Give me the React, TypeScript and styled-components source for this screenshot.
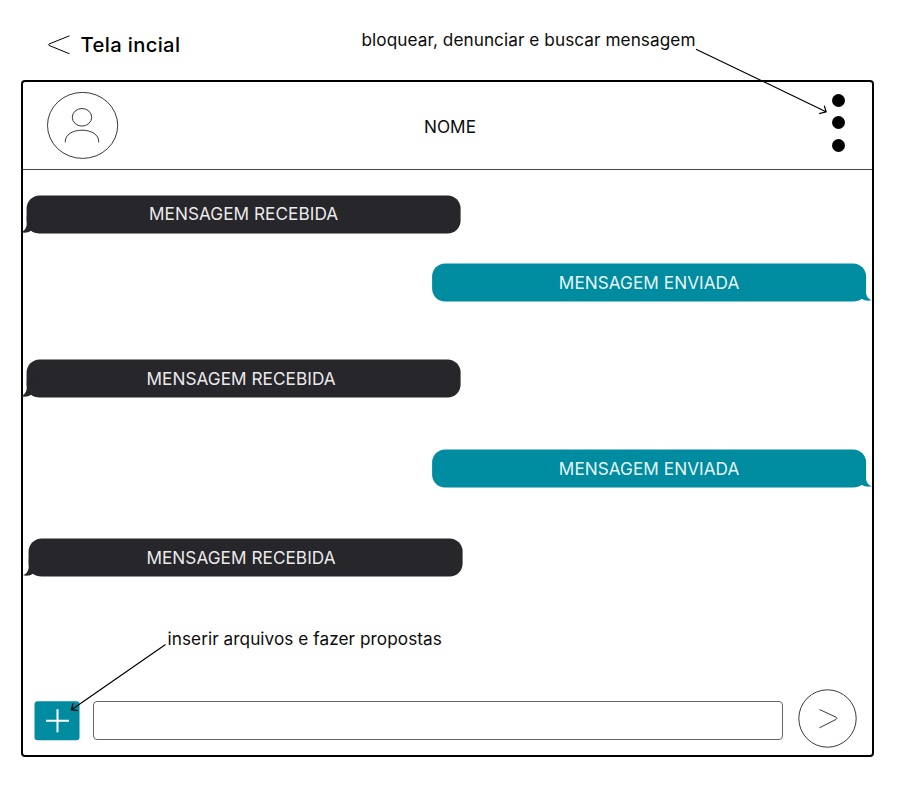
import React from "react";
import styled, { createGlobalStyle } from "styled-components";

const TEAL = "#008ca0";
const DARK = "#27262b";

const GlobalStyle = createGlobalStyle`
  * { box-sizing: border-box; }
  body {
    margin: 0;
    background: #fff;
    color: #000;
    font-family: Inter, sans-serif;
  }
  svg { display: block; overflow: visible; }
`;

const Page = styled.div`
  position: relative;
  width: 901px;
  height: 800px;
  overflow: hidden;
`;

const TopBar = styled.div`
  display: flex;
  height: 80px;
  padding-left: 47px;
`;

const BackLink = styled.div`
  display: flex;
  align-items: center;
  gap: 10.5px;
  width: 314.5px;
  height: 24px;
  margin-top: 33px;
  font-size: 20.2px;
  font-weight: 500;
  line-height: 24px;
  letter-spacing: 0.36px;
  white-space: nowrap;
`;

const Note = styled.div<{ $width: number }>`
  height: 22px;
  color: #0c0c0c;
  font-size: 17.2px;
  line-height: 22px;
  letter-spacing: 0.06px;
  white-space: nowrap;
  width: ${(p) => p.$width}px;
`;

const MenuNote = styled(Note)`
  margin-top: 29px;
`;

const FilesNote = styled(Note)`
  margin: 51px 0 0 144.5px;
`;

const Frame = styled.main`
  display: flex;
  flex-direction: column;
  width: 853px;
  height: 677px;
  margin-left: 21px;
  border: 2px solid #000;
  border-radius: 4px;
`;

const Header = styled.header`
  display: grid;
  grid-template-columns: 96px 1fr 96px;
  height: 88px;
  border-bottom: 1px solid #444;
`;

const Avatar = styled.div`
  padding: 9.5px 0 0 24.3px;
`;

const Name = styled.div`
  padding: 34px 0 0 5px;
  color: #0c0c0c;
  font-size: 17.2px;
  line-height: 22px;
  text-align: center;
`;

const MenuDots = styled.div`
  display: flex;
  flex-direction: column;
  align-items: center;
  gap: 9.5px;
  padding: 11.5px 0 0 29px;
`;

const Dot = styled.i`
  width: 13px;
  height: 13px;
  border-radius: 50%;
  background: #000;
`;

const Messages = styled.section`
  display: flex;
  flex-direction: column;
  height: 407px;
  padding-top: 26px;
`;

const Bubble = styled.div<{
  $sent?: boolean;
  $gap: number;
  $inset: number;
  $shift: number;
  $line: number;
}>`
  position: relative;
  flex: none;
  width: 434px;
  height: 38px;
  margin-bottom: ${(p) => p.$gap}px;
  margin-left: ${(p) => p.$inset}px;
  transform: translate(${(p) => (p.$sent ? 0.1 : -0.4)}px, -0.5px);
  border-radius: 13px;
  background: ${(p) => (p.$sent ? TEAL : DARK)};
  color: rgba(255, 255, 255, 0.93);
  font-size: 17.2px;
  font-weight: 400;
  line-height: ${(p) => p.$line}px;
  letter-spacing: 0.04px;
  text-align: center;
  text-indent: ${(p) => p.$shift}px;
`;

const Tail = styled.svg<{ $sent?: boolean }>`
  position: absolute;
  bottom: 0;
  ${(p) => (p.$sent ? "right: -5px; transform: scaleX(-1);" : "left: -5px;")}
`;

const Composer = styled.div`
  display: flex;
  align-items: center;
  height: 60px;
  margin-top: 38px;
  padding-left: 12px;
`;

const AddButton = styled.div`
  display: grid;
  place-items: center;
  width: 45px;
  height: 39px;
  margin-top: 5px;
  transform: translate(-0.5px, 0.2px);
  border-radius: 3px;
  background: ${TEAL};
`;

const MessageInput = styled.div`
  width: 690px;
  height: 39px;
  margin: 5px 14.5px 0 13px;
  border: 1px solid #666;
  border-radius: 4px;
`;

const Arrows = styled.svg`
  position: absolute;
  inset: 0;
  pointer-events: none;
`;

const messages = [
  { sent: false, gap: 30, inset: 4, shift: 0, line: 36 },
  { sent: true, gap: 58, inset: 409, shift: 0, line: 38 },
  { sent: false, gap: 52, inset: 4, shift: -5, line: 38 },
  { sent: true, gap: 51, inset: 409, shift: 0, line: 38 },
  { sent: false, gap: 0, inset: 6.4, shift: -10, line: 38 },
];

export default function App() {
  return (
    <>
      <GlobalStyle />
      <Page>
        <TopBar>
          <BackLink>
            <svg width="23" height="20" fill="none" stroke="#000" strokeWidth="1">
              <path d="M22.5 .8 2 9Q.8 9.7 2 10.4L22.5 18.8" />
            </svg>
            Tela incial
          </BackLink>
          <MenuNote $width={334}>bloquear, denunciar e buscar mensagem</MenuNote>
        </TopBar>
        <Frame>
          <Header>
            <Avatar>
              <svg width="71" height="67" fill="none" stroke="#222" strokeWidth="0.9">
                <ellipse cx="35.6" cy="33.4" rx="35.1" ry="33" />
                <ellipse cx="35" cy="25.3" rx="9.7" ry="8.8" />
                <path d="M18.3 50.5V49.5C18.3 42.6 25.7 38.2 35 38.2S51.7 42.6 51.7 49.5V50.5" />
              </svg>
            </Avatar>
            <Name>NOME</Name>
            <MenuDots>
              <Dot />
              <Dot />
              <Dot />
            </MenuDots>
          </Header>
          <Messages>
            {messages.map((m, i) => (
              <Bubble
                key={i}
                $sent={m.sent}
                $gap={m.gap}
                $inset={m.inset}
                $shift={m.shift}
                $line={m.line}
              >
                <Tail $sent={m.sent} width="18" height="18">
                  <path
                    d="M5.2 0V7C5.2 12 3.6 15 -.6 16.8C3.3 17.8 7 17 9.4 15.3Q12 17.5 18 17.5V0Z"
                    fill={m.sent ? TEAL : DARK}
                  />
                </Tail>
                {m.sent ? "MENSAGEM ENVIADA" : "MENSAGEM RECEBIDA"}
              </Bubble>
            ))}
          </Messages>
          <FilesNote $width={275}>inserir arquivos e fazer propostas</FilesNote>
          <Composer>
            <AddButton>
              <svg width="24" height="24" stroke="#fff" strokeWidth="2">
                <path d="M12 0V23M.5 11.5H23.5" />
              </svg>
            </AddButton>
            <MessageInput />
            <svg width="59" height="59" fill="none" stroke="#222" strokeWidth="0.9">
              <circle cx="29.5" cy="29.5" r="28.7" />
              <path d="M21.5 20.5 38 28.2Q39.8 29.3 38 30.4L21.5 38.8" />
            </svg>
          </Composer>
        </Frame>
        <Arrows width="901" height="800" fill="none" stroke="#000" strokeWidth="1.2">
          <path d="M696 49.2 826 111.7M824.3 105.7 826.2 111.8 819.2 113.6" />
          <path d="M165.5 644.5 71.5 709.8M73 703.2 71.5 709.8 78 710.6" />
        </Arrows>
      </Page>
    </>
  );
}
